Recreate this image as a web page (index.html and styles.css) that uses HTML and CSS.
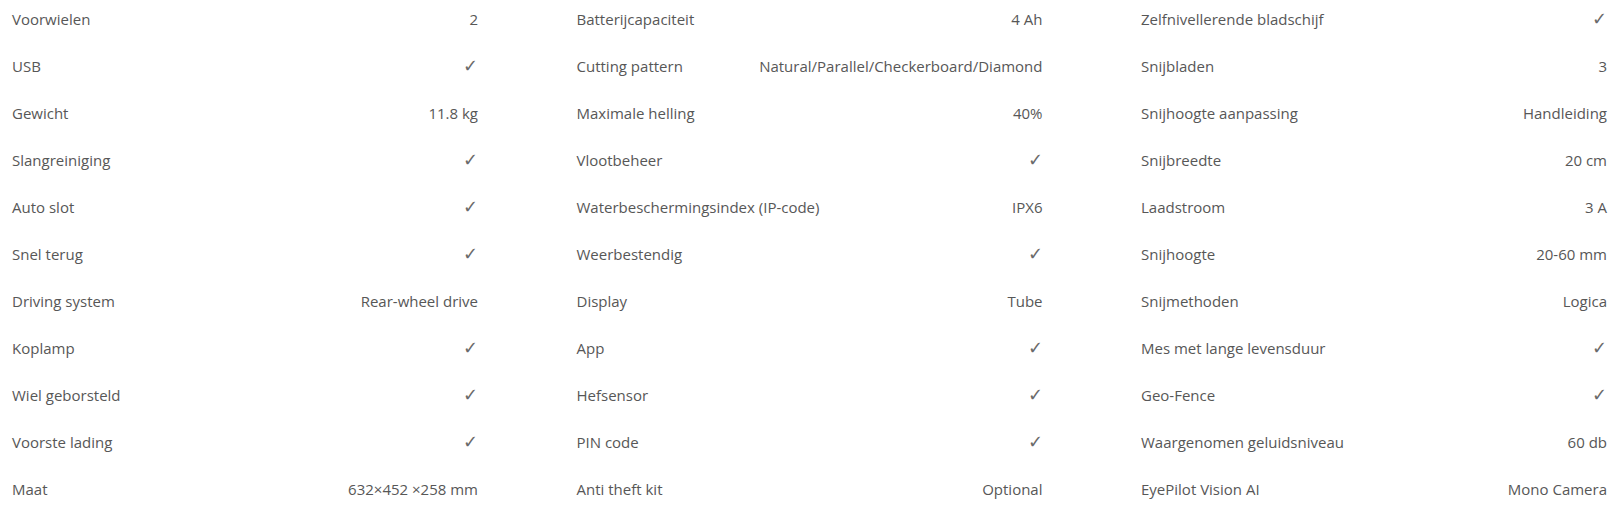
FILE: index.html
```html
<!DOCTYPE html>
<html lang="nl">
<head>
<meta charset="utf-8">
<title>Specificaties</title>
<link rel="stylesheet" href="styles.css">
</head>
<body>
<div class="specs">
  <div class="col">
    <div class="row"><span class="label">Voorwielen</span><span class="value">2</span></div>
    <div class="row"><span class="label">USB</span><span class="value check">✓</span></div>
    <div class="row"><span class="label">Gewicht</span><span class="value">11.8 kg</span></div>
    <div class="row"><span class="label">Slangreiniging</span><span class="value check">✓</span></div>
    <div class="row"><span class="label">Auto slot</span><span class="value check">✓</span></div>
    <div class="row"><span class="label">Snel terug</span><span class="value check">✓</span></div>
    <div class="row"><span class="label">Driving system</span><span class="value">Rear-wheel drive</span></div>
    <div class="row"><span class="label">Koplamp</span><span class="value check">✓</span></div>
    <div class="row"><span class="label">Wiel geborsteld</span><span class="value check">✓</span></div>
    <div class="row"><span class="label">Voorste lading</span><span class="value check">✓</span></div>
    <div class="row"><span class="label">Maat</span><span class="value">632×452 ×258 mm</span></div>
  </div>
  <div class="col">
    <div class="row"><span class="label">Batterijcapaciteit</span><span class="value">4 Ah</span></div>
    <div class="row"><span class="label">Cutting pattern</span><span class="value">Natural/Parallel/Checkerboard/Diamond</span></div>
    <div class="row"><span class="label">Maximale helling</span><span class="value">40%</span></div>
    <div class="row"><span class="label">Vlootbeheer</span><span class="value check">✓</span></div>
    <div class="row"><span class="label">Waterbeschermingsindex (IP-code)</span><span class="value">IPX6</span></div>
    <div class="row"><span class="label">Weerbestendig</span><span class="value check">✓</span></div>
    <div class="row"><span class="label">Display</span><span class="value">Tube</span></div>
    <div class="row"><span class="label">App</span><span class="value check">✓</span></div>
    <div class="row"><span class="label">Hefsensor</span><span class="value check">✓</span></div>
    <div class="row"><span class="label">PIN code</span><span class="value check">✓</span></div>
    <div class="row"><span class="label">Anti theft kit</span><span class="value">Optional</span></div>
  </div>
  <div class="col">
    <div class="row"><span class="label">Zelfnivellerende bladschijf</span><span class="value check">✓</span></div>
    <div class="row"><span class="label">Snijbladen</span><span class="value">3</span></div>
    <div class="row"><span class="label">Snijhoogte aanpassing</span><span class="value">Handleiding</span></div>
    <div class="row"><span class="label">Snijbreedte</span><span class="value">20 cm</span></div>
    <div class="row"><span class="label">Laadstroom</span><span class="value">3 A</span></div>
    <div class="row"><span class="label">Snijhoogte</span><span class="value">20-60 mm</span></div>
    <div class="row"><span class="label">Snijmethoden</span><span class="value">Logica</span></div>
    <div class="row"><span class="label">Mes met lange levensduur</span><span class="value check">✓</span></div>
    <div class="row"><span class="label">Geo-Fence</span><span class="value check">✓</span></div>
    <div class="row"><span class="label">Waargenomen geluidsniveau</span><span class="value">60 db</span></div>
    <div class="row"><span class="label">EyePilot Vision AI</span><span class="value">Mono Camera</span></div>
  </div>
</div>
</body>
</html>
```
FILE: styles.css
```css
html, body {
  margin: 0;
  padding: 0;
  background: #ffffff;
}
body {
  font-family: "Open Sans", "Noto Sans", "DejaVu Sans", sans-serif;
  font-size: 15px;
  color: #575757;
}
.specs {
  display: grid;
  grid-template-columns: repeat(3, 466px);
  column-gap: 98.5px;
  padding: 0 12px;
}
.col {
  display: flex;
  flex-direction: column;
}
.row {
  display: flex;
  justify-content: space-between;
  align-items: center;
  height: 47px;
  box-sizing: border-box;
  padding: 8px 0 17px;
  line-height: 22px;
  white-space: nowrap;
}
.value {
  text-align: right;
}
.check {
  font-family: "DejaVu Sans", sans-serif;
  font-size: 18px;
  font-weight: 200;
  color: #6a6a6a;
}
```
